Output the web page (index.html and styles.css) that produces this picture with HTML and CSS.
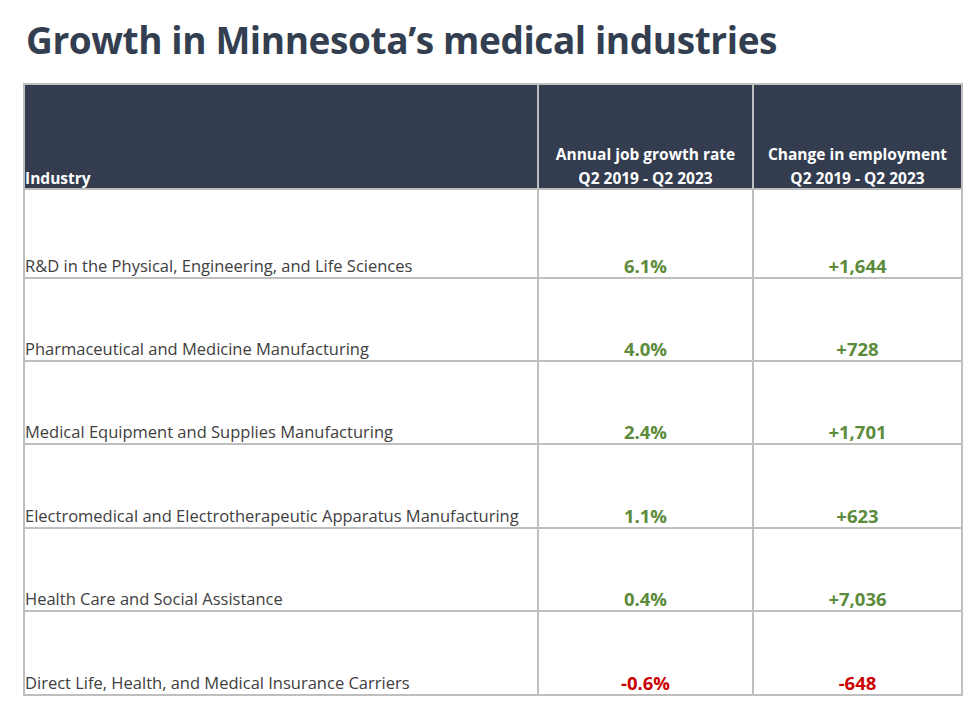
FILE: index.html
```html
<!DOCTYPE html>
<html>
<head>
<meta charset="utf-8">
<link rel="stylesheet" href="styles.css">
</head>
<body>
<h1 class="title">Growth in Minnesota’s medical industries</h1>
<table class="grid">
  <colgroup>
    <col class="c1"><col class="c2"><col class="c3">
  </colgroup>
  <thead>
    <tr>
      <th class="left"><div class="hd">Industry</div></th>
      <th><div class="hd">Annual job growth rate<br>Q2 2019 - Q2 2023</div></th>
      <th><div class="hd">Change in employment<br>Q2 2019 - Q2 2023</div></th>
    </tr>
  </thead>
  <tbody>
    <tr class="r1"><td class="name">R&amp;D in the Physical, Engineering, and Life Sciences</td><td class="val pos">6.1%</td><td class="val pos">+1,644</td></tr>
    <tr class="r2"><td class="name">Pharmaceutical and Medicine Manufacturing</td><td class="val pos">4.0%</td><td class="val pos">+728</td></tr>
    <tr class="r3"><td class="name">Medical Equipment and Supplies Manufacturing</td><td class="val pos">2.4%</td><td class="val pos">+1,701</td></tr>
    <tr class="r4"><td class="name">Electromedical and Electrotherapeutic Apparatus Manufacturing</td><td class="val pos">1.1%</td><td class="val pos">+623</td></tr>
    <tr class="r5"><td class="name">Health Care and Social Assistance</td><td class="val pos">0.4%</td><td class="val pos">+7,036</td></tr>
    <tr class="r6"><td class="name">Direct Life, Health, and Medical Insurance Carriers</td><td class="val neg">-0.6%</td><td class="val neg">-648</td></tr>
  </tbody>
</table>
</body>
</html>
```
FILE: styles.css
```css
html, body {
  margin: 0;
  padding: 0;
  background: #ffffff;
}
body {
  font-family: "Open Sans", "Liberation Sans", sans-serif;
  color: #333f50;
}
.title {
  margin: 0;
  padding: 16px 0 0 26px;
  height: 67px;
  box-sizing: border-box;
  font-size: 37px;
  font-weight: 700;
  line-height: 48px;
  color: #333f50;
  letter-spacing: -0.4px;
  white-space: nowrap;
}
.grid {
  margin: 16px 0 0 23px;
  border-collapse: collapse;
  table-layout: fixed;
  width: 938px;
}
.c1 { width: 514px; }
.c2 { width: 215px; }
.c3 { width: 209px; }
.grid th, .grid td {
  border: 2px solid #bfbfbf;
  vertical-align: bottom;
  padding: 0 0 1px 0;
  white-space: nowrap;
  box-sizing: border-box;
}
.grid th {
  background: #333d4f;
  color: #ffffff;
  font-weight: 700;
  font-size: 15.5px;
  line-height: 24px;
  text-align: center;
  height: 105px;
  padding-bottom: 0;
}
.hd {
  margin-bottom: -2px;
}
.grid th.left {
  text-align: left;
}
.grid td {
  font-size: 16.5px;
  line-height: 20px;
}
.r1 td { height: 89px; }
.r2 td { height: 83px; }
.r3 td { height: 83px; }
.r4 td { height: 84px; }
.r5 td { height: 83px; }
.r6 td { height: 84px; }
.grid td.name {
  color: #404040;
  text-align: left;
}
.grid td.val {
  text-align: center;
  font-weight: 700;
  font-size: 18.5px;
}
.pos { color: #5b8b3b; }
.neg { color: #cc0000; }
```
